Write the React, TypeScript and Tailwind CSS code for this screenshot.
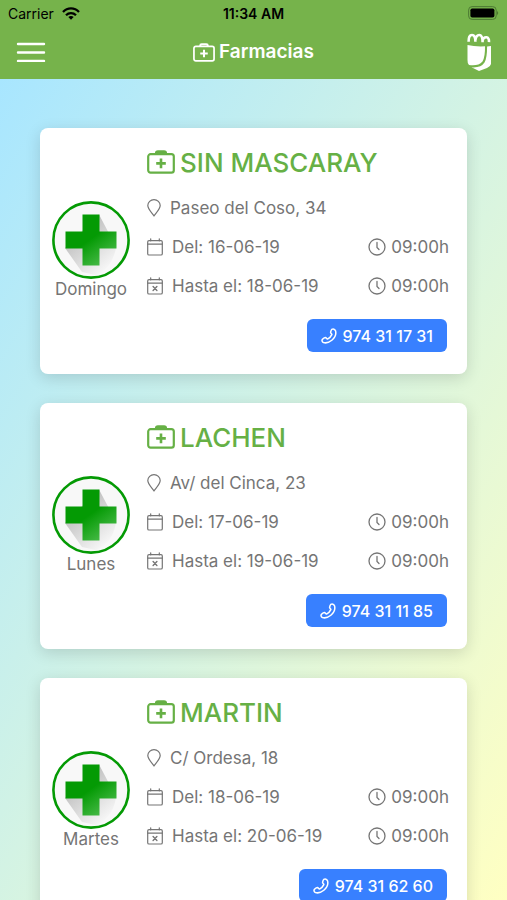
import { useState } from 'react';

interface Pharmacy {
  id: number;
  day: string;
  name: string;
  address: string;
  from: string;
  to: string;
  hour: string;
  phone: string;
}

const pharmacies: Pharmacy[] = [
  { id: 1, day: 'Domingo', name: 'SIN MASCARAY', address: 'Paseo del Coso, 34', from: '16-06-19', to: '18-06-19', hour: '09:00h', phone: '974 31 17 31' },
  { id: 2, day: 'Lunes', name: 'LACHEN', address: 'Av/ del Cinca, 23', from: '17-06-19', to: '19-06-19', hour: '09:00h', phone: '974 31 11 85' },
  { id: 3, day: 'Martes', name: 'MARTIN', address: 'C/ Ordesa, 18', from: '18-06-19', to: '20-06-19', hour: '09:00h', phone: '974 31 62 60' },
];

function MedkitIcon({ className }: { className: string }) {
  return (
    <svg viewBox="0 0 28 24" className={className} fill="none" stroke="currentColor" strokeWidth="2.2" aria-hidden="true">
      <rect x="1.2" y="4.2" width="25.6" height="18.4" rx="2.4" />
      <path d="M9.2 4.2V3.4Q9.2 1.6 11 1.6h6Q18.800 1.6 18.800 3.4v.8" strokeWidth="2.600" />
      <path d="M14 8.600v9.600M9.200 13.400h9.600" strokeWidth="2.600" />
    </svg>
  );
}

function PinIcon() {
  return (
    <svg viewBox="0 0 14 18" className="mb-0.5 h-[18px] w-[14px]" fill="none" stroke="currentColor" strokeWidth="1.2" aria-hidden="true">
      <path d="M7 17C5 14 .8 9.800 .8 6.500a6.200 5.900 0 0 1 12.400 0C13.200 9.800 9 14 7 17z" strokeLinejoin="round" />
    </svg>
  );
}

function CalendarIcon({ crossed = false }: { crossed?: boolean }) {
  return (
    <svg viewBox="0 0 16 18" className="mb-0.5 h-[18px] w-4" fill="none" stroke="currentColor" strokeWidth="1.2" strokeLinecap="round" aria-hidden="true">
      <rect x=".7" y="2.700" width="14.600" height="14.300" rx="1.300" />
      <path d="M.7 6.200h14.600M3.700 .8v2M12.300 .8v2" />
      {crossed && <path d="M6.100 9.600l3.800 3.800M9.900 9.600l-3.800 3.800" strokeWidth="1.400" />}
    </svg>
  );
}

function ClockIcon() {
  return (
    <svg viewBox="0 0 18 18" className="mb-0.5 size-[18px]" fill="none" stroke="currentColor" strokeWidth="1.3" strokeLinecap="round" aria-hidden="true">
      <circle cx="9" cy="9" r="8" />
      <path d="M9 4.500V9.500l2 2" />
    </svg>
  );
}

function PhoneIcon() {
  return (
    <svg viewBox="0 0 18 18" className="size-4" fill="none" stroke="currentColor" strokeWidth="1.700" strokeLinejoin="round" aria-hidden="true">
      <path d="M12.200 1.500C13.600 .8 15.600 1.300 16.300 3C17.400 7 15.700 11 12.200 13.800C9 16.400 5.500 17.200 2.800 16.400C1.100 15.800 .7 14 1.700 12.700C2.600 11.700 3.800 11 4.900 10.800C6.200 10.700 6.300 12.700 7.400 12.300C9.300 11.500 11.300 9.500 12.200 7.500C12.500 6.400 10.700 6.200 10.800 4.900C11 3.700 11.500 2.200 12.200 1.500z" />
    </svg>
  );
}

function PharmacyCross() {
  return (
    <svg viewBox="0 0 78 78" className="size-[78px]" aria-hidden="true">
      <defs>
        <linearGradient id="cross" x1=".3" y1=".3" x2=".8" y2="1">
          <stop offset=".3" stopColor="#049a04" />
          <stop offset="1" stopColor="#4fbe4f" />
        </linearGradient>
        <linearGradient id="shade" x1=".3" y1=".2" x2=".8" y2=".9">
          <stop offset="0" stopColor="#bdbdbd" />
          <stop offset="1" stopColor="#f6f6f6" />
        </linearGradient>
      </defs>
      <circle cx="39" cy="39" r="37.600" fill="#f8f8f8" stroke="#049a04" strokeWidth="2.600" />
      <path d="M47 13.500L56 30.500L64 47Q60 68 44 74L30 71L13 47z" fill="url(#shade)" />
      <path d="M30.500 13.500h17v17H64.500v17h-17v17h-17v-17h-17v-17h17z" fill="url(#cross)" />
    </svg>
  );
}

function StatusBar() {
  return (
    <div className="grid h-7 grid-cols-3 items-center px-2 text-sm text-black">
      <div className="flex items-center gap-2">
        <span>Carrier</span>
        <svg viewBox="0 0 18 13" className="mb-0.5 h-[13px] w-[18px]" fill="none" stroke="currentColor" strokeWidth="2.300" aria-hidden="true">
          <path d="M1 5C5.500 .2 12.500 .2 17 5M4 8.200c2.800-2.800 7.200-2.800 10 0" />
          <path d="M9 12.700L6.300 10q2.700-2.200 5.400 0z" fill="currentColor" stroke="none" />
        </svg>
      </div>
      <span className="text-center font-semibold">11:34 AM</span>
      <svg viewBox="0 0 32 14" className="mb-0.5 h-[14px] w-8 justify-self-end" aria-hidden="true">
        <rect x="1.600" y=".6" width="27.600" height="12.800" rx="3.500" fill="none" stroke="#4d7a33" strokeWidth="1" />
        <rect x="3.400" y="2.400" width="24" height="9.200" rx="1.800" />
        <path d="M30.400 4.800q1.600 2.200 0 4.400z" fill="#33561f" />
      </svg>
    </div>
  );
}

function Header({ onMenu }: { onMenu: () => void }) {
  return (
    <header className="shrink-0 bg-[#76b34b]">
      <StatusBar />
      <div className="grid h-[51px] grid-cols-[1fr_auto_1fr] items-center px-4 pb-[3px] text-white">
        <button type="button" onClick={onMenu} aria-label="Menú" className="justify-self-start">
          <svg viewBox="0 0 30 20" className="h-5 w-[30px]" stroke="currentColor" strokeWidth="2.400" strokeLinecap="round" aria-hidden="true">
            <path d="M2 2h26M2 10.500h26M2 19h26" />
          </svg>
        </button>
        <h1 className="flex items-center gap-1 text-[19px] font-semibold">
          <MedkitIcon className="h-[19px] w-[22px]" />
          Farmacias
        </h1>
        <svg viewBox="0 0 24 38" className="h-[38px] w-6 justify-self-end" fill="currentColor" aria-hidden="true">
          <path d="M1.600 8.800Q1.500 2 5 2Q8.400 2 8.400 8.800M8.400 7Q9.200 2 12.200 2Q15.600 2 15.600 9.200M15.600 7.500Q16.500 4 19.400 4.200Q22.300 4.600 22 9.200" fill="none" stroke="currentColor" strokeWidth="2.600" />
          <path d="M.5 12Q8 13.800 18 13.300Q18.200 24 15.500 28.500Q11 33.500 2 32Q.3 30 .5 27z" />
          <path d="M20.100 13.500L24 13V31Q23.500 33.500 20 35L12 38L4.500 34.300Q14 35 17.500 29.500Q20.100 25 20.100 13.500z" />
        </svg>
      </div>
    </header>
  );
}

function PharmacyCard({ pharmacy }: { pharmacy: Pharmacy }) {
  return (
    <article className="flex rounded-lg bg-white pt-4 pr-[18px] pb-[22px] pl-3 text-[17px] text-[#757575] shadow-[0_4px_16px_rgba(0,0,0,0.14)]">
      <div className="flex w-[78px] shrink-0 flex-col items-center justify-center pt-1">
        <PharmacyCross />
        <span className="leading-5">{pharmacy.day}</span>
      </div>
      <div className="ml-[17px] flex min-w-0 flex-1 flex-col">
        <h2 className="flex h-9 items-center gap-[5px] text-[26px] font-medium text-[#66b045]">
          <MedkitIcon className="h-6 w-7" />
          {pharmacy.name}
        </h2>
        <p className="mt-[9px] flex h-[39px] items-center gap-[9px]">
          <PinIcon />
          {pharmacy.address}
        </p>
        <div className="flex h-[39px] items-center justify-between">
          <span className="flex items-center gap-[9px]">
            <CalendarIcon />
            Del: {pharmacy.from}
          </span>
          <span className="flex items-center gap-[5px]">
            <ClockIcon />
            {pharmacy.hour}
          </span>
        </div>
        <div className="flex h-[39px] items-center justify-between">
          <span className="flex items-center gap-[9px]">
            <CalendarIcon crossed />
            Hasta el: {pharmacy.to}
          </span>
          <span className="flex items-center gap-[5px]">
            <ClockIcon />
            {pharmacy.hour}
          </span>
        </div>
        <a
          href={`tel:${pharmacy.phone.replace(/ /g, '')}`}
          className="mt-[13px] mr-0.5 flex h-[33px] items-center gap-[6px] self-end rounded-md bg-[#3880ff] px-[14px] text-base font-medium text-white"
        >
          <PhoneIcon />
          {pharmacy.phone}
        </a>
      </div>
    </article>
  );
}

export default function App() {
  const [menuOpen, setMenuOpen] = useState(false);

  return (
    <div className="flex h-screen flex-col overflow-hidden font-[Inter,sans-serif]" data-menu={menuOpen}>
      <Header onMenu={() => setMenuOpen(!menuOpen)} />
      <main className="min-h-0 flex-1 overflow-y-auto bg-linear-to-br from-[#a8e6ff] to-[#ffffc2] px-10 pt-[49px] pb-10 [scrollbar-width:none]">
        <div className="flex flex-col gap-[29px]">
          {pharmacies.map((pharmacy) => (
            <PharmacyCard key={pharmacy.id} pharmacy={pharmacy} />
          ))}
        </div>
      </main>
    </div>
  );
}
